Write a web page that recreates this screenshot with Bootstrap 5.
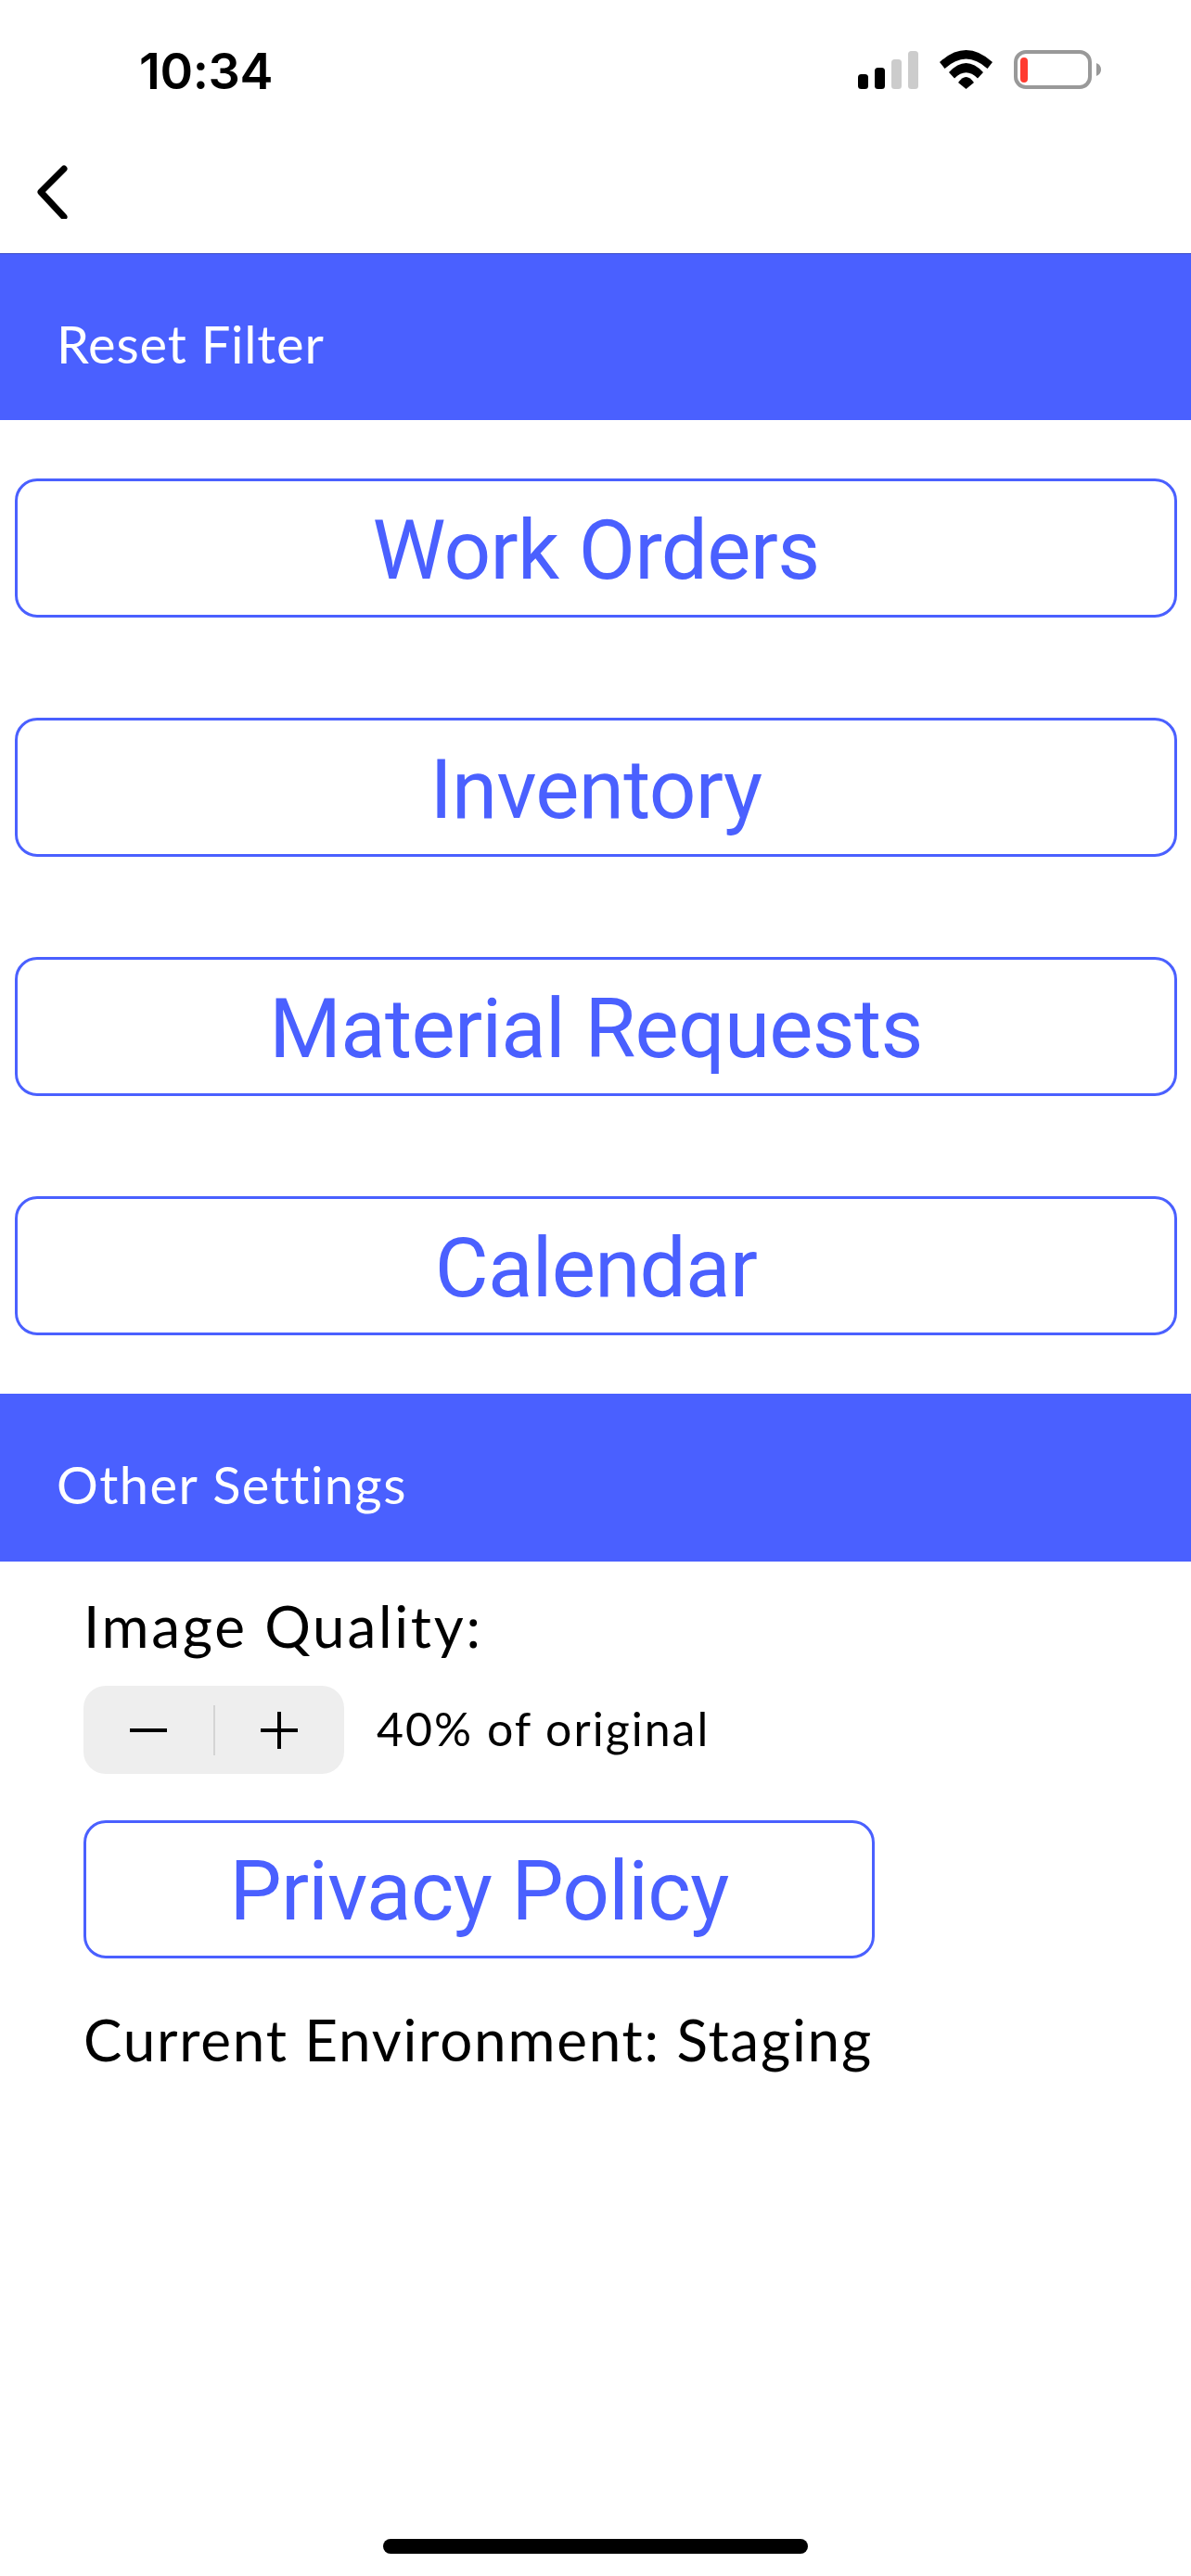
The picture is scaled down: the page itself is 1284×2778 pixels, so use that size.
<!DOCTYPE html>
<html lang="en">

<head>
    <meta charset="UTF-8">
    <meta name="viewport" content="width=device-width, initial-scale=1.0">
    <title>Settings</title>
    <link href="https://cdn.jsdelivr.net/npm/bootstrap@5.3.0/dist/css/bootstrap.min.css" rel="stylesheet">
    <style>
        body {
            background-color: #fff;
            color: #000;
            font-family: "Lato", "Liberation Sans", sans-serif;
            min-height: 2778px;
        }

        .status-row {
            height: 140px;
            padding-left: 150px;
        }

        .clock {
            font-family: "Inter", "Liberation Sans", sans-serif;
            font-size: 54px;
            font-weight: 600;
            letter-spacing: -0.4px;
            line-height: 1;
            margin-top: 50px;
        }

        .status-icons {
            margin: 54px 0 0 auto;
            padding-right: 95px;
        }

        .status-icons svg,
        .back-row svg {
            display: block;
        }

        .back-row {
            height: 133px;
            padding: 36px 0 0 36px;
        }

        .blue-band {
            background-color: #4a60ff;
            color: #fff;
            font-size: 56px;
            letter-spacing: 1.5px;
            height: 181px;
            padding: 14px 0 0 61px;
        }

        .band-edge {
            border-top: 1px solid #3a4cc8;
            height: 180px;
            letter-spacing: 0.8px;
        }

        .menu-stack {
            gap: 108px;
            padding: 63px 15px 63px 16px;
        }

        .outline-tile {
            border: 3px solid #4a60ff;
            border-radius: 24px;
            color: #4a60ff;
            font-family: "Roboto", "Liberation Sans", sans-serif;
            font-size: 89px;
            letter-spacing: -0.7px;
            height: 150px;
            line-height: 1;
            padding: 4px 0 0;
        }

        .outline-tile:hover {
            background-color: #fff;
            color: #4a60ff;
            border-color: #4a60ff;
        }

        .other-block {
            padding: 32px 0 0 90px;
        }

        .line-big {
            font-size: 62px;
            letter-spacing: 2.7px;
            line-height: 74px;
        }

        .stepper-row {
            gap: 35px;
            margin-top: 28px;
        }

        .stepper {
            background-color: #eee;
            border-radius: 24px;
            height: 95px;
            width: 281px;
        }

        .stepper-half {
            background: none;
            border: 0;
            padding: 0;
            width: 140px;
        }

        .stepper-half svg {
            display: block;
            margin: 0 auto;
        }

        .stepper-rule {
            background-color: #d4d4d4;
            height: 54px;
            width: 2px;
        }

        .step-note {
            font-size: 50px;
            letter-spacing: 2px;
            margin-bottom: 2px;
        }

        .privacy-tile {
            display: block;
            height: 149px;
            margin-top: 50px;
            width: 853px;
        }

        .env-line {
            letter-spacing: 1.75px;
            margin-top: 50px;
        }

        .home-bar {
            background-color: #000;
            border-radius: 8px;
            bottom: 24px;
            height: 16px;
            left: 413px;
            position: absolute;
            width: 458px;
        }
    </style>
</head>

<body>
    <!-- Status bar -->
    <div class="d-flex status-row">
        <div class="clock">10:34</div>
        <div class="status-icons">
            <svg width="264" height="42" viewBox="925 54 264 42">
                <rect x="925" y="80" width="11" height="16" rx="3.5" fill="#000"/>
                <rect x="943" y="73" width="11" height="23" rx="3.5" fill="#000"/>
                <rect x="961" y="64" width="11" height="32" rx="3.5" fill="#ccc"/>
                <rect x="979" y="55" width="11" height="41" rx="3.5" fill="#ccc"/>
                <path d="M1013 67 Q1041.5 41 1070 67 L1064.5 74 Q1041.5 53 1018.5 74 Z" fill="#000"/>
                <path d="M1023 78 Q1041.5 58 1060 78 L1054 84.5 Q1041.5 72 1029 84.5 Z" fill="#000"/>
                <path d="M1033 89 Q1041.5 77 1050 89 L1041.5 96 Z" fill="#000"/>
                <rect x="1095" y="56" width="80" height="38" rx="11" fill="none" stroke="#999" stroke-width="4"/>
                <rect x="1100" y="62" width="8" height="27" rx="4" fill="#ff3b30"/>
                <path d="M1182 68 Q1187 70 1187 75 Q1187 80 1182 82 Z" fill="#999"/>
            </svg>
        </div>
    </div>

    <div class="back-row">
        <svg width="40" height="60" viewBox="0 0 40 60">
            <path d="M33 6 L8 31 L33 58" fill="none" stroke="#000" stroke-width="7" stroke-linecap="round" stroke-linejoin="round"/>
        </svg>
    </div>

    <div class="blue-band band-edge d-flex align-items-center">Reset Filter</div>

    <div class="d-flex flex-column menu-stack">
        <button type="button" class="btn outline-tile">Work Orders</button>
        <button type="button" class="btn outline-tile">Inventory</button>
        <button type="button" class="btn outline-tile">Material Requests</button>
        <button type="button" class="btn outline-tile">Calendar</button>
    </div>

    <div class="blue-band d-flex align-items-center">Other Settings</div>

    <div class="other-block">
        <div class="line-big">Image Quality:</div>
        <div class="d-flex align-items-center stepper-row">
            <div class="d-flex align-items-center stepper">
                <button type="button" class="stepper-half" aria-label="Decrease">
                    <svg width="42" height="42" viewBox="0 0 42 42"><path d="M1 21 H41" stroke="#000" stroke-width="4"/></svg>
                </button>
                <div class="stepper-rule"></div>
                <button type="button" class="stepper-half" aria-label="Increase">
                    <svg width="42" height="42" viewBox="0 0 42 42"><path d="M1 21 H41 M21 1 V41" stroke="#000" stroke-width="4"/></svg>
                </button>
            </div>
            <div class="step-note">40% of original</div>
        </div>
        <button type="button" class="btn outline-tile privacy-tile">Privacy Policy</button>
        <div class="line-big env-line">Current Environment: Staging</div>
    </div>

    <div class="home-bar"></div>

    <script src="https://cdn.jsdelivr.net/npm/bootstrap@5.3.0/dist/js/bootstrap.bundle.min.js"></script>
</body>

</html>
